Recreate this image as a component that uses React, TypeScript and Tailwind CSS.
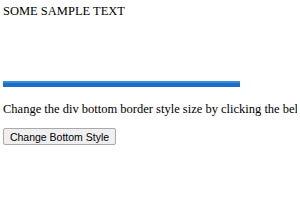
export default function App() {
  return (
    <div className="w-[300px] h-[210px] bg-white px-[3px] pt-[3px] text-black overflow-hidden" style={{ fontFamily: '"Liberation Serif", serif' }}>
      <div className="text-[12.5px] leading-[16px] whitespace-nowrap">SOME SAMPLE TEXT</div>
      <div className="mt-[62px] w-[237px] h-[6px] bg-[#3d8ad8] border-b-4 border-[#1b6ec8]" />
      <p className="mt-[14px] text-[12.5px] leading-[16px] whitespace-nowrap overflow-hidden">
        Change the div bottom border style size by clicking the below button.
      </p>
      <button
        className="mt-[11px] h-[17px] w-[113px] px-0 text-[10.5px] leading-[14px] whitespace-nowrap bg-[#efefef] border border-[#a9a9a9] rounded-[2px] text-black"
        style={{ fontFamily: '"Liberation Sans", Arial, sans-serif' }}
      >
        Change Bottom Style
      </button>
    </div>
  );
}
